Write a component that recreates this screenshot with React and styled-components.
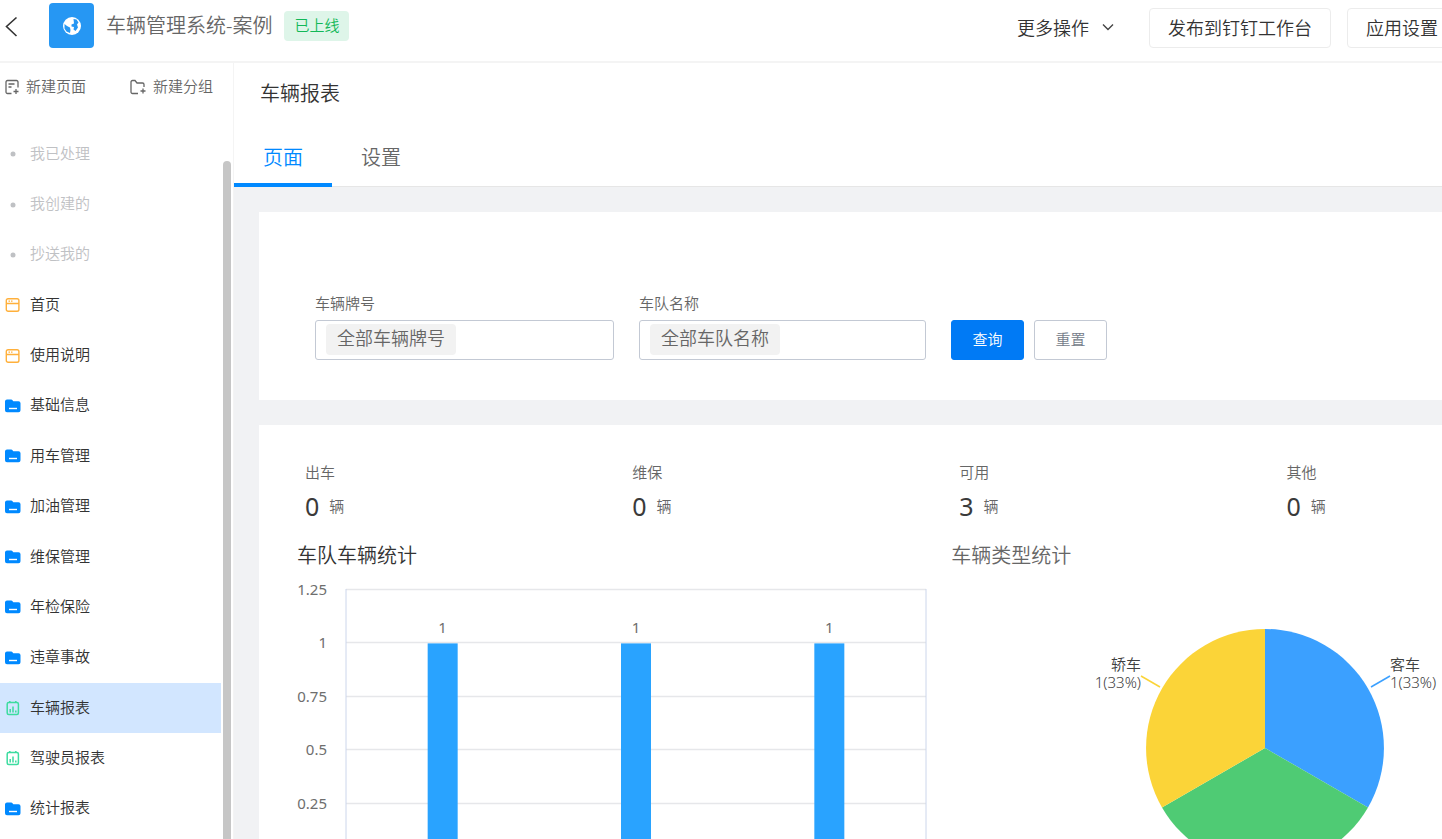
import React, { useState } from "react";
import styled, { createGlobalStyle } from "styled-components";

const COLOR = {
  WHITE: "#ffffff",
  BLUE: "#0089ff",
  PRIMARY: "#007af5",
  LOGO: "#2697f3",
  SELECTED: "#d2e6ff",
  TEXT: "#333333",
  SUBTLE: "#666666",
  MUTED: "#bfc1c4",
  BORDER: "#ececec",
  FIELD: "#c3c9d4",
  PAGE: "#f1f2f4",
  CHIP: "#f2f2f2",
  GREEN: "#12b858",
  GREEN_LIGHT: "#def5e9",
  ORANGE: "#ffb03b",
  MINT: "#3ddca0"
};

const GlobalStyle = createGlobalStyle`
  * {
    box-sizing: border-box;
  }

  body {
    margin: 0;
    overflow: hidden;
    background: ${COLOR.WHITE};
  }

  body, button, input {
    font-family: "Noto Sans", "Noto Sans CJK SC", sans-serif;
    font-weight: 350;
    color: ${COLOR.TEXT};
  }

  button {
    padding: 0;
    border: none;
    background: none;
    cursor: pointer;
  }

  svg {
    display: block;
    flex: none;
  }
`;

const Shell = styled.div`
  display: flex;
  flex-direction: column;
  height: 100vh;
  overflow: hidden;
`;

const Header = styled.header`
  display: flex;
  flex: none;
  align-items: center;
  justify-content: space-between;
  height: 63px;
  padding: 0 0 10px 4px;
  border-bottom: 2px solid #f4f4f4;
`;

const Brand = styled.div`
  display: flex;
  align-items: center;
`;

const BackButton = styled.button`
  width: 45px;
  height: 24px;
`;

const Logo = styled.div`
  display: flex;
  align-items: center;
  justify-content: center;
  width: 45px;
  height: 45px;
  border-radius: 4px;
  background: ${COLOR.LOGO};
`;

const AppName = styled.span`
  margin: 0 12px;
  font-size: 20px;
  line-height: 30px;
  color: ${COLOR.SUBTLE};
`;

const Status = styled.span`
  padding: 0 10px 2px;
  border-radius: 4px;
  background: ${COLOR.GREEN_LIGHT};
  color: ${COLOR.GREEN};
  font-size: 15px;
  line-height: 28px;
`;

const Actions = styled.div`
  display: flex;
  align-items: center;
  gap: 16px;
  margin-right: -15px;
  padding-top: 4px;
`;

const MoreButton = styled.button`
  display: flex;
  align-items: center;
  gap: 12px;
  margin-right: 18px;
  padding-bottom: 2px;
  font-size: 18px;
`;

const OutlineButton = styled.button`
  height: 40px;
  padding: 0 18px 2px;
  border: 1px solid ${COLOR.BORDER};
  border-radius: 4px;
  font-size: 18px;
  white-space: nowrap;
`;

const Body = styled.div`
  display: flex;
  flex: 1;
  min-height: 0;
`;

const Sidebar = styled.aside`
  display: flex;
  flex: none;
  flex-direction: column;
  width: 234px;
  border-right: 1px solid #f4f4f4;
`;

const CreateBar = styled.div`
  display: flex;
  justify-content: space-between;
  height: 66px;
  padding: 12px 20px 0 4px;
`;

const CreateButton = styled.button`
  display: flex;
  align-items: center;
  gap: 6px;
  height: 24px;
  font-size: 15px;
  color: ${COLOR.SUBTLE};
`;

const MenuArea = styled.div`
  display: flex;
  flex: 1;
  gap: 2px;
  min-height: 0;
`;

const Menu = styled.nav`
  display: flex;
  flex: 1;
  flex-direction: column;
  padding-bottom: 5px;
`;

const MenuItem = styled.button`
  display: flex;
  flex: 1;
  align-items: center;
  gap: 9px;
  padding-left: 5px;
  background: ${props => (props.$active ? COLOR.SELECTED : "transparent")};
  color: ${props => (props.$muted ? COLOR.MUTED : COLOR.TEXT)};
  font-size: 15px;
`;

const ItemLabel = styled.span`
  padding-bottom: 4px;
`;

const ScrollThumb = styled.div`
  width: 8px;
  margin: 32px 2px 0 0;
  border-radius: 4px 4px 0 0;
  background: #c6c6c6;
`;

const Main = styled.main`
  display: flex;
  flex: 1;
  flex-direction: column;
  min-width: 0;
`;

const PageTitle = styled.h1`
  margin: 0;
  padding-left: 26px;
  font-size: 20px;
  font-weight: 350;
  line-height: 62px;
`;

const Tabs = styled.div`
  display: flex;
  flex: none;
  height: 62px;
  border-bottom: 1px solid #e6e6e6;
`;

const Tab = styled.button`
  height: 62px;
  padding: 4px 29px 0;
  border-bottom: 4px solid
    ${props => (props.$active ? COLOR.BLUE : "transparent")};
  color: ${props => (props.$active ? COLOR.BLUE : COLOR.SUBTLE)};
  font-size: 20px;
`;

const Content = styled.div`
  display: flex;
  flex: 1;
  flex-direction: column;
  gap: 25px;
  min-height: 0;
  padding: 25px 0 0 25px;
  background: ${COLOR.PAGE};
  overflow: hidden;
`;

const Panel = styled.section`
  flex: none;
  background: ${COLOR.WHITE};
`;

const FilterPanel = styled(Panel)`
  display: flex;
  align-items: flex-end;
  gap: 25px;
  padding: 79px 56px 40px;
`;

const Field = styled.div`
  display: flex;
  flex: 0 1 ${props => props.$size};
  flex-direction: column;
  gap: 5px;
`;

const FieldLabel = styled.label`
  font-size: 15px;
  line-height: 24px;
  color: ${COLOR.SUBTLE};
`;

const FieldBox = styled.div`
  display: flex;
  align-items: center;
  height: 40px;
  padding: 0 10px 2px;
  border: 1px solid ${COLOR.FIELD};
  border-radius: 3px;
`;

const Chip = styled.span`
  flex: none;
  padding: 0 11px 2px;
  border-radius: 4px;
  background: ${COLOR.CHIP};
  color: ${COLOR.SUBTLE};
  font-size: 18px;
  line-height: 29px;
`;

const FieldInput = styled.input`
  flex: 1;
  min-width: 0;
  height: 30px;
  border: none;
  background: none;

  &:focus {
    outline: none;
  }
`;

const ButtonGroup = styled.div`
  display: flex;
  gap: 10px;
`;

const FormButton = styled.button`
  width: 73px;
  height: 40px;
  padding-bottom: 4px;
  border: 1px solid ${props => (props.$primary ? COLOR.PRIMARY : COLOR.FIELD)};
  border-radius: 3px;
  background: ${props => (props.$primary ? COLOR.PRIMARY : COLOR.WHITE)};
  color: ${props => (props.$primary ? COLOR.WHITE : "#747c89")};
  font-size: 15px;
`;

const ReportPanel = styled(Panel)`
  flex: 1 0 auto;
  padding: 35px 0 0 38px;
`;

const Stats = styled.div`
  display: grid;
  grid-template-columns: 2fr 2fr 2fr 1fr;
  margin-bottom: 4px;
`;

const Stat = styled.div`
  padding-left: 8px;
  color: ${COLOR.SUBTLE};
  font-size: 15px;
  line-height: 24px;
`;

const StatValue = styled.div`
  display: flex;
  align-items: center;
  gap: 10px;
  line-height: 44px;
`;

const StatNumber = styled.strong`
  color: #3a3a3a;
  font-size: 25px;
  font-weight: 400;
`;

const Charts = styled.div`
  display: grid;
  grid-template-columns: 4fr 3fr;
`;

const ChartTitle = styled.h2`
  margin: 0;
  color: ${props => (props.$strong ? COLOR.TEXT : COLOR.SUBTLE)};
  font-size: 20px;
  font-weight: 350;
  line-height: 48px;
`;

const AxisText = styled.text`
  fill: #6e6e6e;
  font-size: 15px;
  font-weight: 400;
`;

const SliceText = styled.text`
  fill: #404040;
  font-size: 15px;
`;

const PieSlot = styled.div`
  display: flex;
  justify-content: flex-end;
`;

const BackIcon = () => (
  <svg width="16" height="24" viewBox="0 0 16 24" fill="none" stroke="#333" strokeWidth="1.6">
    <path d="M12.500 3.500 2.500 12.500l10 9.500" />
  </svg>
);

const GlobeIcon = () => (
  <svg width="20" height="20" viewBox="0 0 20 20">
    <circle cx="10" cy="10" r="9" fill="#fff" />
    <path
      d="M11.500 3 14.500 3.500 16.500 6.500 15 8.500 16 11.500 13.500 15 11.500 13.500 12 11 9.500 10.500 9.500 8.500 12 7.500Z"
      fill={COLOR.LOGO}
    />
    <path d="M2.500 8 5 10l3 1.500.5 2.500-.5 3-3.500-1.500-2-3Z" fill={COLOR.LOGO} />
  </svg>
);

const ChevronIcon = () => (
  <svg width="14" height="10" viewBox="0 0 14 10" fill="none" stroke="#444" strokeWidth="1.400">
    <path d="m2 2.500 5 5 5-5" />
  </svg>
);

const NewPageIcon = () => (
  <svg width="16" height="16" viewBox="0 0 16 16" fill="none" stroke="#666" strokeWidth="1.300">
    <path d="M7.500 14.500H3.500a1.500 1.500 0 0 1-1.500-1.500V3a1.500 1.500 0 0 1 1.500-1.500h9A1.500 1.500 0 0 1 14 3v5.500M4.500 5h6M4.500 8h3M12 10v5M9.500 12.500h5" />
  </svg>
);

const NewGroupIcon = () => (
  <svg width="18" height="16" viewBox="0 0 18 16" fill="none" stroke="#666" strokeWidth="1.300">
    <path d="M9 14.500H3.500A1.500 1.500 0 0 1 2 13V3a1.500 1.500 0 0 1 1.500-1.500H6l2 2.500h5.500A1.500 1.500 0 0 1 15 5.500V8M14 9.500v5M11.500 12h5" />
  </svg>
);

const DotIcon = () => (
  <svg width="16" height="16" viewBox="0 0 16 16">
    <circle cx="8" cy="8" r="2.500" fill={COLOR.MUTED} />
  </svg>
);

const PageIcon = () => (
  <svg width="16" height="16" viewBox="0 0 16 16" fill="none" stroke={COLOR.ORANGE} strokeWidth="1.400">
    <rect x="1.300" y="1.700" width="12.600" height="12.600" rx="1.800" />
    <path d="M1.500 6.500h12.500M3.500 4.100h1.500M6 4.100h1.500" />
  </svg>
);

const FolderIcon = () => (
  <svg width="16" height="16" viewBox="0 0 16 16">
    <path
      d="M2 1.500h4.200c.6 0 1 .2 1.300.7l.8 1.100h5.200a2 2 0 0 1 2 2v7a2 2 0 0 1-2 2H2a2 2 0 0 1-2-2v-9a2 2 0 0 1 2-1.800Z"
      fill={COLOR.BLUE}
    />
    <path d="M4 10.500h8" stroke="#fff" strokeWidth="1.400" />
  </svg>
);

const ReportIcon = () => (
  <svg width="16" height="16" viewBox="0 0 16 16" fill="none" stroke={COLOR.MINT} strokeWidth="1.500">
    <rect x="2.200" y="2.500" width="11.200" height="12" rx="1.500" />
    <path d="M4.800 1v2M10.800 1v2M5.200 9v3.500M8 6.500v6M10.800 10.500v2" />
  </svg>
);

const MENU = [
  { name: "我已处理", icon: DotIcon, muted: true },
  { name: "我创建的", icon: DotIcon, muted: true },
  { name: "抄送我的", icon: DotIcon, muted: true },
  { name: "首页", icon: PageIcon },
  { name: "使用说明", icon: PageIcon },
  { name: "基础信息", icon: FolderIcon },
  { name: "用车管理", icon: FolderIcon },
  { name: "加油管理", icon: FolderIcon },
  { name: "维保管理", icon: FolderIcon },
  { name: "年检保险", icon: FolderIcon },
  { name: "违章事故", icon: FolderIcon },
  { name: "车辆报表", icon: ReportIcon },
  { name: "驾驶员报表", icon: ReportIcon },
  { name: "统计报表", icon: FolderIcon }
];

const FILTERS = [
  { id: "plate", label: "车辆牌号", chip: "全部车辆牌号", size: "299px" },
  { id: "fleet", label: "车队名称", chip: "全部车队名称", size: "287px" }
];

const STATS = [
  { label: "出车", value: 0 },
  { label: "维保", value: 0 },
  { label: "可用", value: 3 },
  { label: "其他", value: 0 }
];

const TICKS = ["1.25", "1", "0.75", "0.5", "0.25"];
const BARS = [1, 1, 1];

const BarChart = () => {
  const left = 49;
  const width = 580;
  const top = 9;
  const height = 267;
  const slot = width / BARS.length;
  const y = value => top + height - (value / 1.25) * height;

  return (
    <svg width="632" height="290" viewBox="0 0 632 290">
      {TICKS.map(tick => (
        <g key={tick}>
          <path
            d={`M${left} ${Math.round(y(tick)) + 0.5}h${width}`}
            stroke="#e6e7ea"
            strokeWidth="1.500"
          />
          <AxisText x="30" y={y(tick) + 6} textAnchor="end">
            {tick}
          </AxisText>
        </g>
      ))}
      <path
        d={`M${left} ${top}v${height}M${left + width} ${top}v${height}`}
        stroke="#ccd6eb"
      />
      {BARS.map((value, i) => (
        <g key={i}>
          <rect
            x={left + slot * (i + 0.5) - 15}
            y={y(value) + 1}
            width="30"
            height={y(0) - y(value)}
            fill="#29a3ff"
          />
          <AxisText x={left + slot * (i + 0.5)} y={y(value) - 9} textAnchor="middle">
            {value}
          </AxisText>
        </g>
      ))}
    </svg>
  );
};

const PieChart = () => (
  <svg width="352" height="290" viewBox="0 0 352 290">
    <path d="M175 168V49A119 119 0 0 1 278 227.500Z" fill="#3ba0ff" />
    <path d="M175 168 278 227.500A119 119 0 0 1 72 227.500Z" fill="#4fcb74" />
    <path d="M175 168 72 227.500A119 119 0 0 1 175 49Z" fill="#fbd438" />
    <path d="M281 107 300 96" stroke="#3ba0ff" strokeWidth="1.500" />
    <path d="M70 107 51 96" stroke="#fbd438" strokeWidth="1.500" />
    <SliceText x="300" y="90">
      客车
    </SliceText>
    <SliceText x="300" y="108">
      1(33%)
    </SliceText>
    <SliceText x="51" y="90" textAnchor="end">
      轿车
    </SliceText>
    <SliceText x="51" y="108" textAnchor="end">
      1(33%)
    </SliceText>
  </svg>
);

export default () => {
  const [active, setActive] = useState("车辆报表");
  const [tab, setTab] = useState("页面");

  return (
    <Shell>
      <GlobalStyle />
      <Header>
        <Brand>
          <BackButton aria-label="返回">
            <BackIcon />
          </BackButton>
          <Logo>
            <GlobeIcon />
          </Logo>
          <AppName>车辆管理系统-案例</AppName>
          <Status>已上线</Status>
        </Brand>
        <Actions>
          <MoreButton>
            更多操作
            <ChevronIcon />
          </MoreButton>
          <OutlineButton>发布到钉钉工作台</OutlineButton>
          <OutlineButton>应用设置</OutlineButton>
        </Actions>
      </Header>
      <Body>
        <Sidebar>
          <CreateBar>
            <CreateButton>
              <NewPageIcon />
              <ItemLabel>新建页面</ItemLabel>
            </CreateButton>
            <CreateButton>
              <NewGroupIcon />
              <ItemLabel>新建分组</ItemLabel>
            </CreateButton>
          </CreateBar>
          <MenuArea>
            <Menu>
              {MENU.map(({ name, icon: Icon, muted }) => (
                <MenuItem
                  key={name}
                  $active={name === active}
                  $muted={muted}
                  onClick={() => setActive(name)}
                >
                  <Icon />
                  <ItemLabel>{name}</ItemLabel>
                </MenuItem>
              ))}
            </Menu>
            <ScrollThumb />
          </MenuArea>
        </Sidebar>
        <Main>
          <PageTitle>车辆报表</PageTitle>
          <Tabs>
            {["页面", "设置"].map(name => (
              <Tab key={name} $active={name === tab} onClick={() => setTab(name)}>
                {name}
              </Tab>
            ))}
          </Tabs>
          <Content>
            <FilterPanel>
              {FILTERS.map(({ id, label, chip, size }) => (
                <Field key={id} $size={size}>
                  <FieldLabel htmlFor={id}>{label}</FieldLabel>
                  <FieldBox>
                    <Chip>{chip}</Chip>
                    <FieldInput id={id} type="text" />
                  </FieldBox>
                </Field>
              ))}
              <ButtonGroup>
                <FormButton $primary>查询</FormButton>
                <FormButton>重置</FormButton>
              </ButtonGroup>
            </FilterPanel>
            <ReportPanel>
              <Stats>
                {STATS.map(({ label, value }) => (
                  <Stat key={label}>
                    {label}
                    <StatValue>
                      <StatNumber>{value}</StatNumber>辆
                    </StatValue>
                  </Stat>
                ))}
              </Stats>
              <Charts>
                <div>
                  <ChartTitle $strong>车队车辆统计</ChartTitle>
                  <BarChart />
                </div>
                <div>
                  <ChartTitle>车辆类型统计</ChartTitle>
                  <PieSlot>
                    <PieChart />
                  </PieSlot>
                </div>
              </Charts>
            </ReportPanel>
          </Content>
        </Main>
      </Body>
    </Shell>
  );
};
